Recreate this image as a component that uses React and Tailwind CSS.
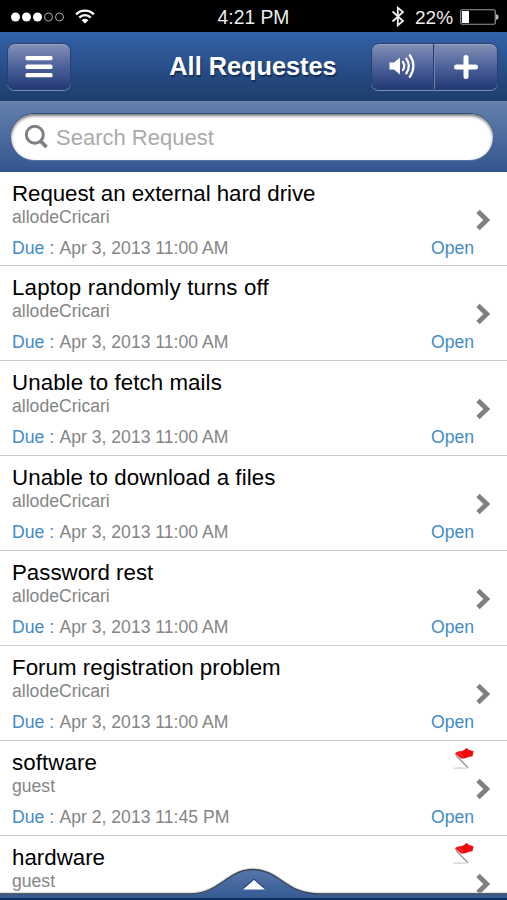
const requests = [
  { title: 'Request an external hard drive', user: 'allodeCricari', due: 'Apr 3, 2013 11:00 AM', tracking: 'tracking-[-0.05px]' },
  { title: 'Laptop randomly turns off', user: 'allodeCricari', due: 'Apr 3, 2013 11:00 AM', tracking: 'tracking-[0.18px]' },
  { title: 'Unable to fetch mails', user: 'allodeCricari', due: 'Apr 3, 2013 11:00 AM', tracking: 'tracking-[0.08px]' },
  { title: 'Unable to download a files', user: 'allodeCricari', due: 'Apr 3, 2013 11:00 AM', tracking: 'tracking-[0.07px]' },
  { title: 'Password rest', user: 'allodeCricari', due: 'Apr 3, 2013 11:00 AM', tracking: 'tracking-normal' },
  { title: 'Forum registration problem', user: 'allodeCricari', due: 'Apr 3, 2013 11:00 AM', tracking: 'tracking-[0.04px]' },
  { title: 'software', user: 'guest', due: 'Apr 2, 2013 11:45 PM', tracking: 'tracking-[0.1px]', flag: true },
  { title: 'hardware', user: 'guest', tracking: 'tracking-normal', flag: true },
];

function StatusBar() {
  return (
    <div className="flex h-8 shrink-0 items-center justify-between bg-black pl-[11px] pr-[8px] pt-[3px] text-[19px] text-[#eee]">
      <div className="flex w-[160px] items-center gap-[13px]">
        <svg width="54" height="12" viewBox="0 0 54 12">
          <circle cx="4.5" cy="5" r="4.5" fill="#fff" />
          <circle cx="15.5" cy="5" r="4.5" fill="#fff" />
          <circle cx="26.5" cy="5" r="4.5" fill="#fff" />
          <circle cx="37.5" cy="5" r="4" fill="none" stroke="#aaa" />
          <circle cx="48.5" cy="5" r="4" fill="none" stroke="#aaa" />
        </svg>
        <svg className="-ml-[3px] -mt-[2px]" width="20" height="15" viewBox="0 0 20 15" fill="none" stroke="#fff" strokeWidth="2.3">
          <path d="M1.1 5.4a12.6 12.6 0 0 1 17.8 0" />
          <path d="M4.3 8.6a8 8 0 0 1 11.4 0" />
          <path d="M10 14.6 6.6 11.2a4.8 4.8 0 0 1 6.8 0Z" fill="#fff" stroke="none" />
        </svg>
      </div>
      <span className="-ml-[3px] mt-[2px] whitespace-nowrap text-[19.3px]">4:21 PM</span>
      <div className="flex w-[160px] items-center justify-end">
        <svg className="-mt-[2px]" width="14" height="21" viewBox="0 0 14 21" fill="none" stroke="#eee" strokeWidth="1.8">
          <path d="M1.5 5.5 12 15 6.8 19.3V1.7L12 6 1.5 15.5" />
        </svg>
        <span className="ml-[10px] mt-[2px] w-[38px] whitespace-nowrap">22%</span>
        <svg className="ml-[7px] -mt-[1px]" width="39" height="16" viewBox="0 0 39 16">
          <rect x=".75" y=".75" width="34.5" height="14.5" rx="1.5" fill="none" stroke="#999" strokeWidth="1.2" />
          <rect x="2" y="2" width="7" height="12" fill="#fff" />
          <path d="M36 5.2q2.5 0 2.5 2.8T36 10.8Z" fill="#bbb" />
        </svg>
      </div>
    </div>
  );
}

const buttonFace =
  'flex h-[47px] items-center justify-center rounded-[8px] border border-[#29406f] bg-linear-to-b from-[#8490b5] via-[#4d629b] to-[#243a76] shadow-[0_1px_0_#7890b8,inset_0_1px_0_#98a4c4]';

function NavBar() {
  return (
    <header className="flex h-[69px] shrink-0 items-center justify-between bg-linear-to-b from-[#3362a8] to-[#1d3d6c] pl-[7px] pr-[9px]">
      <button className={buttonFace + ' w-[64px]'}>
        <svg width="28" height="22" viewBox="0 0 28 22" fill="#fff">
          <rect x=".5" y="0" width="27" height="4.3" rx="1.5" />
          <rect x=".5" y="8.6" width="27" height="4.3" rx="1.5" />
          <rect x=".5" y="17" width="27" height="4.3" rx="1.5" />
        </svg>
      </button>
      <h1 className="ml-[64px] whitespace-nowrap text-[25.3px] font-bold text-white [text-shadow:1px_2px_1px_#152d55]">All Requestes</h1>
      <div className={buttonFace + ' w-[127px]'}>
        <button className="flex h-full w-[62px] items-center justify-center border-r border-[#2b3d6e]">
          <svg className="-mt-[2px]" width="26" height="26" viewBox="0 0 26 26" fill="none" stroke="#fff" strokeWidth="2.2" strokeLinecap="round">
            <path d="M.5 9.5H5l6-5v17l-6-5H.5Z" fill="#fff" stroke="none" />
            <path d="M14 9q2.6 4 0 8M17.3 5.6q5 7.4 0 14.8M20.8 2.2q7.2 10.8 0 21.6" />
          </svg>
        </button>
        <button className="flex h-full w-[63px] items-center justify-center border-l border-[#7180ab]">
          <svg width="24" height="24" viewBox="0 0 24 24" stroke="#fff" strokeWidth="5" strokeLinecap="round">
            <path d="M12 2.5v19M2.5 12h19" />
          </svg>
        </button>
      </div>
    </header>
  );
}

function SearchBar() {
  return (
    <div className="h-[70.6px] shrink-0 border-b border-[#2f4f83] border-t border-t-[#70839f] bg-linear-to-b from-[#6480ac] to-[#34558f] pl-[11px] pr-[14px] pt-[12px]">
      <div className="flex h-[46px] items-center rounded-full bg-white pl-[12px] shadow-[inset_0_2px_3px_#777,0_-1px_0_#344e7a,0_1px_0_#58749f]">
        <svg width="26" height="26" viewBox="0 0 26 26" fill="none" stroke="#7d8186" strokeWidth="3">
          <circle cx="11.8" cy="10.8" r="8.5" />
          <path d="m17.5 17 6 6" strokeWidth="3.8" />
        </svg>
        <span className="ml-[7px] text-[22px] text-[#aaa]">Search Request</span>
      </div>
    </div>
  );
}

function Flag() {
  return (
    <svg className="absolute left-[452px] top-[6px]" width="23" height="23" viewBox="0 0 23 23">
      <path d="M1 21.3q6-1.2 14 0Z" fill="#aaa" stroke="#ccc" strokeWidth=".5" />
      <path d="M4 8.5 16 20.7" stroke="#999" strokeWidth="1.4" />
      <path d="M3 7C4.5 3.8 8 5 11 3.6c1.8-.8 2.4-1.9 4-2.6l1.5 1.8 5 1.4-1 5c-4.5.2-6 2.6-11 2.4Z" fill="#f5090d" />
      <path d="m4 6.8 5 4.8M6.4 5.4l4.8 4.4" stroke="#ff7672" strokeWidth=".8" />
    </svg>
  );
}

function RequestRow({ item }) {
  return (
    <li className="relative flex h-[94.85px] shrink-0 items-start justify-between border-b border-[#ccc] pl-[12px]">
      <div className="whitespace-nowrap text-[17.6px] text-[#858585]">
        <h2 className={'pt-[8px] text-[22.3px] leading-[27px] text-black ' + item.tracking}>{item.title}</h2>
        <p className="text-[17.6px] leading-[20px]">{item.user}</p>
        {item.due && (
          <p className="mt-[11px] flex gap-[5.5px] leading-[21px]">
            <span className="w-[42px] text-[#438bc7]">Due :</span>
            <span>{item.due}</span>
          </p>
        )}
      </div>
      <div className="flex h-full items-start">
        {item.due && <span className="mt-[66px] text-[17.6px] leading-[21px] text-[#438bc7]">Open</span>}
        <svg className="ml-[2px] mr-[16px] mt-[37px]" width="15" height="22" viewBox="0 0 15 22" fill="none" stroke="#808080" strokeWidth="4.8">
          <path d="m2 2.5 8.8 8.5L2 19.5" />
        </svg>
      </div>
      {item.flag && <Flag />}
    </li>
  );
}

function BottomDrawer() {
  return (
    <svg className="absolute bottom-0 left-0" width="507" height="36" viewBox="0 0 507 36">
      <defs>
        <linearGradient id="drawer" x2="0" y2="1">
          <stop offset="0" stopColor="#5677aa" />
          <stop offset="1" stopColor="#31568f" />
        </linearGradient>
      </defs>
      <path d="M0 29.5H190C220 29.5 227 5.2 253 5.2S286 29.5 318 29.5H507" fill="none" stroke="#bbb" strokeWidth="3" opacity=".5" />
      <path d="M-2 29.8H190C220 29.8 227 5.5 253 5.5S286 29.8 318 29.8H509V38H-2Z" fill="url(#drawer)" stroke="#3c4652" strokeWidth="1.3" />
      <path d="M0 35H507" stroke="#102c5c" strokeWidth="2" />
      <path d="M243 25.5 254 16l11 9.5Z" fill="#fff" />
      <path d="m243 24.5 11-9.5 11 9.5" fill="none" stroke="#243e6d" strokeWidth="1" />
    </svg>
  );
}

export default function App() {
  return (
    <main className="relative flex h-[900px] w-[507px] flex-col overflow-hidden bg-white font-['Liberation_Sans',Arial,sans-serif]">
      <StatusBar />
      <NavBar />
      <SearchBar />
      <ul className="flex min-h-0 flex-1 flex-col overflow-hidden">
        {requests.map((item) => (
          <RequestRow key={item.title} item={item} />
        ))}
      </ul>
      <BottomDrawer />
    </main>
  );
}
